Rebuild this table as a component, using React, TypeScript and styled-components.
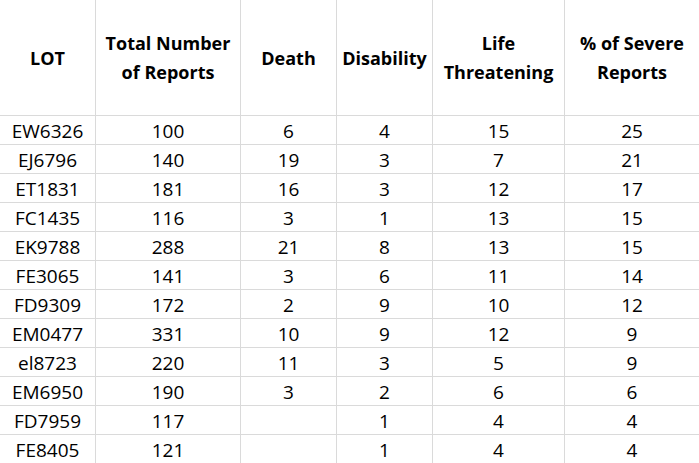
import styled, { createGlobalStyle } from "styled-components";

const GlobalStyle = createGlobalStyle`
  html, body {
    margin: 0;
    padding: 0;
    background: #ffffff;
  }
`;

type Row = {
  lot: string;
  total: number;
  death?: number;
  disability: number;
  life: number;
  severe: number;
};

const rows: Row[] = [
  { lot: "EW6326", total: 100, death: 6, disability: 4, life: 15, severe: 25 },
  { lot: "EJ6796", total: 140, death: 19, disability: 3, life: 7, severe: 21 },
  { lot: "ET1831", total: 181, death: 16, disability: 3, life: 12, severe: 17 },
  { lot: "FC1435", total: 116, death: 3, disability: 1, life: 13, severe: 15 },
  { lot: "EK9788", total: 288, death: 21, disability: 8, life: 13, severe: 15 },
  { lot: "FE3065", total: 141, death: 3, disability: 6, life: 11, severe: 14 },
  { lot: "FD9309", total: 172, death: 2, disability: 9, life: 10, severe: 12 },
  { lot: "EM0477", total: 331, death: 10, disability: 9, life: 12, severe: 9 },
  { lot: "el8723", total: 220, death: 11, disability: 3, life: 5, severe: 9 },
  { lot: "EM6950", total: 190, death: 3, disability: 2, life: 6, severe: 6 },
  { lot: "FD7959", total: 117, disability: 1, life: 4, severe: 4 },
  { lot: "FE8405", total: 121, disability: 1, life: 4, severe: 4 },
];

const headers = [
  "LOT",
  "Total Number of Reports",
  "Death",
  "Disability",
  "Life Threatening",
  "% of Severe Reports",
];

function App() {
  return (
    <>
      <GlobalStyle />
      <Sheet>
        {headers.map((h, i) => (
          <HeaderCell key={h} $last={i === headers.length - 1}>
            <HeaderText>{h}</HeaderText>
          </HeaderCell>
        ))}
        {rows.map((r) => {
          const cells = [r.lot, r.total, r.death ?? "", r.disability, r.life, r.severe];
          return cells.map((c, i) => (
            <Cell key={r.lot + i} $last={i === cells.length - 1}>
              {c}
            </Cell>
          ));
        })}
      </Sheet>
    </>
  );
}

export default App;

const Sheet = styled.div`
  display: grid;
  grid-template-columns: 96px 145px 96px 96px 132px 134px;
  grid-template-rows: 116px repeat(12, 29px);
  width: 699px;
  height: 463px;
  overflow: hidden;
  font-family: "Open Sans", "Noto Sans", sans-serif;
  color: #000;
`;

const BaseCell = styled.div<{ $last?: boolean }>`
  display: flex;
  align-items: center;
  justify-content: center;
  border-right: ${(p) => (p.$last ? "none" : "1px solid #dadada")};
  border-bottom: 1px solid #dadada;
  box-sizing: border-box;
`;

const HeaderCell = styled(BaseCell)`
  padding: 0 4px;
`;

const HeaderText = styled.span`
  font-weight: 700;
  font-size: 18px;
  line-height: 29px;
  text-align: center;
  padding-top: 1px;
`;

const Cell = styled(BaseCell)`
  font-size: 19px;
  padding-top: 1px;
`;
